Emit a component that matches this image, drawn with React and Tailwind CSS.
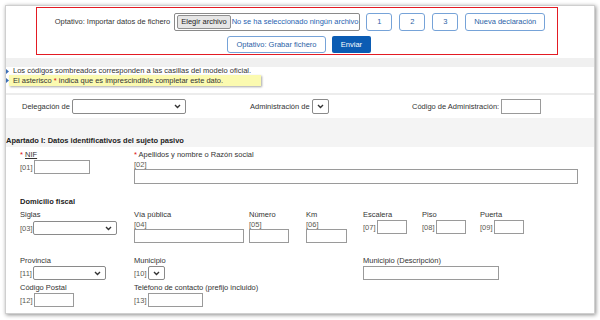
import React from 'react'

function Chev() {
  return (
    <svg width="7" height="5" viewBox="0 0 7 5">
      <path d="M1 1l2.5 2.5L6 1" fill="none" stroke="#333" strokeWidth="1.4" />
    </svg>
  )
}

function Select({ w }) {
  return (
    <div className={`${w} h-[14px] border border-[#8a8a8a] rounded-[2px] bg-white flex items-center justify-end pr-[4px]`}>
      <Chev />
    </div>
  )
}

function Field({ w, h = 'h-[14px]' }) {
  return <div className={`${w} ${h} border border-[#9a9a9a] bg-white`} />
}

function Code({ children }) {
  return <span className="text-[#5a5a52] leading-[9px]">{children}</span>
}

function Bullet() {
  return (
    <svg width="3" height="5" viewBox="0 0 3 5" className="shrink-0">
      <path d="M0 0L3 2.5L0 5Z" fill="#3b6fb6" />
    </svg>
  )
}

function BlueButton({ children, w }) {
  return (
    <div className={`${w} h-full border border-[#76a3d8] rounded-[3px] bg-white text-[#2a62a6] flex items-center justify-center whitespace-nowrap`}>
      {children}
    </div>
  )
}

export default function App() {
  return (
    <div className="w-[600px] h-[320px] bg-white overflow-hidden pt-[5px] pl-[5px] font-['Liberation_Sans',Arial,sans-serif] text-[7.5px] text-[#333] leading-[10px]">
      <div className="w-[590px] h-[309px] border border-[#cfcfcf] shadow-[1px_1px_4px_rgba(0,0,0,0.45)] bg-white overflow-hidden">
        {/* import / export box */}
        <div className="ml-[30px] mt-[1px] w-[522px] h-[48px] border border-[#e31b23] pt-[5px]">
          <div className="h-[18px] flex items-center justify-center pl-[6px]">
            <span className="mr-[4px] whitespace-nowrap">Optativo: Importar datos de fichero</span>
            <div className="w-[186px] h-[18px] border border-[#8a8a8a] rounded-[2px] flex items-center pl-[2px] mr-[6px] whitespace-nowrap overflow-hidden">
              <div className="h-[14px] px-[3px] bg-[#e6e6e6] border border-[#8f8f8f] rounded-[2px] flex items-center text-[#222]">Elegir archivo</div>
              <span className="ml-[1px] text-[#1f5fb0]">No se ha seleccionado ningún archivo</span>
            </div>
            <div className="h-[18px] flex gap-[7px]">
              <BlueButton w="w-[26px]">1</BlueButton>
              <BlueButton w="w-[26px]">2</BlueButton>
              <BlueButton w="w-[26px]">3</BlueButton>
              <BlueButton w="w-[80px]">Nueva declaración</BlueButton>
            </div>
          </div>
          <div className="mt-[5px] h-[17px] flex justify-center gap-[6px] pl-[4px]">
            <BlueButton w="w-[99px]">Optativo: Grabar fichero</BlueButton>
            <div className="w-[39px] h-full rounded-[2px] bg-[#0b5cb3] text-white flex items-center justify-center">Enviar</div>
          </div>
        </div>

        <div className="mt-[3px] h-[9px] bg-[#f0f0f0]" />

        {/* notes */}
        <div className="h-[8px] leading-[8px] flex items-center">
          <Bullet />
          <span className="ml-[4px]">Los códigos sombreados corresponden a las casillas del modelo oficial.</span>
        </div>
        <div className="h-[11px] flex items-center">
          <Bullet />
          <span className="h-[11px] leading-[11px] pl-[4px] w-[252px] bg-[#fbfab0] shadow-[1px_1px_2px_rgba(0,0,0,0.35)]">
            El asterisco <span className="text-[#e01010]">*</span> indica que es imprescindible completar este dato.
          </span>
        </div>
        <div className="mt-[7px] h-[2px] bg-[#ececec]" />

        {/* delegación row */}
        <div className="h-[23px] flex items-center pl-[16px]">
          <div className="w-[228px] flex items-center">
            <span className="mr-[2px]">Delegación de</span>
            <div className="w-[114px] h-[15px] border border-[#8a8a8a] rounded-[2px] flex items-center justify-end pr-[4px]"><Chev /></div>
          </div>
          <div className="w-[162px] flex items-center">
            <span className="mr-[2px]">Administración de</span>
            <div className="w-[17px] h-[15px] border border-[#8a8a8a] rounded-[2px] flex items-center justify-center"><Chev /></div>
          </div>
          <div className="flex items-center">
            <span className="mr-[2px]">Código de Administración:</span>
            <Field w="w-[40px]" h="h-[15px]" />
          </div>
        </div>

        {/* section heading */}
        <div className="h-[29px] bg-[#f4f4f4] flex items-end pb-[1px]">
          <span className="font-bold text-[#222]">Apartado I: Datos identificativos del sujeto pasivo</span>
        </div>

        <div className="pl-[14px]">
          {/* NIF row */}
          <div className="mt-[3px] flex">
            <div className="w-[114px]">
              <div className="h-[10px]"><span className="text-[#e01010]">*</span> <span className="underline">NIF</span></div>
              <div className="flex items-center gap-[1px]">
                <Code>[01]</Code>
                <Field w="w-[56px]" />
              </div>
            </div>
            <div>
              <div className="h-[10px]"><span className="text-[#e01010]">*</span> Apellidos y nombre o Razón social</div>
              <div className="h-[9px] flex items-center"><Code>[02]</Code></div>
              <Field w="w-[444px]" h="h-[15px]" />
            </div>
          </div>

          <div className="mt-[13px] h-[10px] font-bold text-[#222]">Domicilio fiscal</div>

          {/* siglas row */}
          <div className="mt-[3px] flex">
            <div className="w-[114px]">
              <div className="h-[10px]">Siglas</div>
              <div className="mt-[1px] flex items-center">
                <Code>[03]</Code>
                <Select w="w-[84px]" />
              </div>
            </div>
            <div className="w-[115px]">
              <div className="h-[10px]">Vía pública</div>
              <div className="h-[9px] flex items-center"><Code>[04]</Code></div>
              <Field w="w-[110px]" />
            </div>
            <div className="w-[57px]">
              <div className="h-[10px]">Número</div>
              <div className="h-[9px] flex items-center"><Code>[05]</Code></div>
              <Field w="w-[40px]" />
            </div>
            <div className="w-[57px]">
              <div className="h-[10px]">Km</div>
              <div className="h-[9px] flex items-center"><Code>[06]</Code></div>
              <Field w="w-[41px]" />
            </div>
            <div className="w-[59px]">
              <div className="h-[10px]">Escalera</div>
              <div className="flex items-center gap-[1px]">
                <Code>[07]</Code>
                <Field w="w-[30px]" />
              </div>
            </div>
            <div className="w-[58px]">
              <div className="h-[10px]">Piso</div>
              <div className="flex items-center gap-[1px]">
                <Code>[08]</Code>
                <Field w="w-[30px]" />
              </div>
            </div>
            <div>
              <div className="h-[10px]">Puerta</div>
              <div className="flex items-center gap-[1px]">
                <Code>[09]</Code>
                <Field w="w-[30px]" />
              </div>
            </div>
          </div>

          {/* provincia row */}
          <div className="mt-[13px] flex">
            <div className="w-[114px]">
              <div className="h-[10px]">Provincia</div>
              <div className="flex items-center gap-[1px]">
                <Code>[11]</Code>
                <Select w="w-[73px]" />
              </div>
            </div>
            <div className="w-[229px]">
              <div className="h-[10px]">Municipio</div>
              <div className="flex items-center gap-[1px]">
                <Code>[10]</Code>
                <div className="w-[17px] h-[14px] border border-[#8a8a8a] rounded-[2px] flex items-center justify-center"><Chev /></div>
              </div>
            </div>
            <div>
              <div className="h-[10px]">Municipio (Descripción)</div>
              <Field w="w-[136px]" />
            </div>
          </div>

          {/* código postal row */}
          <div className="mt-[3px] flex">
            <div className="w-[114px]">
              <div className="h-[10px]">Código Postal</div>
              <div className="flex items-center gap-[1px]">
                <Code>[12]</Code>
                <Field w="w-[40px]" />
              </div>
            </div>
            <div>
              <div className="h-[10px]">Teléfono de contacto (prefijo incluido)</div>
              <div className="flex items-center gap-[1px]">
                <Code>[13]</Code>
                <Field w="w-[55px]" />
              </div>
            </div>
          </div>
        </div>
      </div>
    </div>
  )
}
